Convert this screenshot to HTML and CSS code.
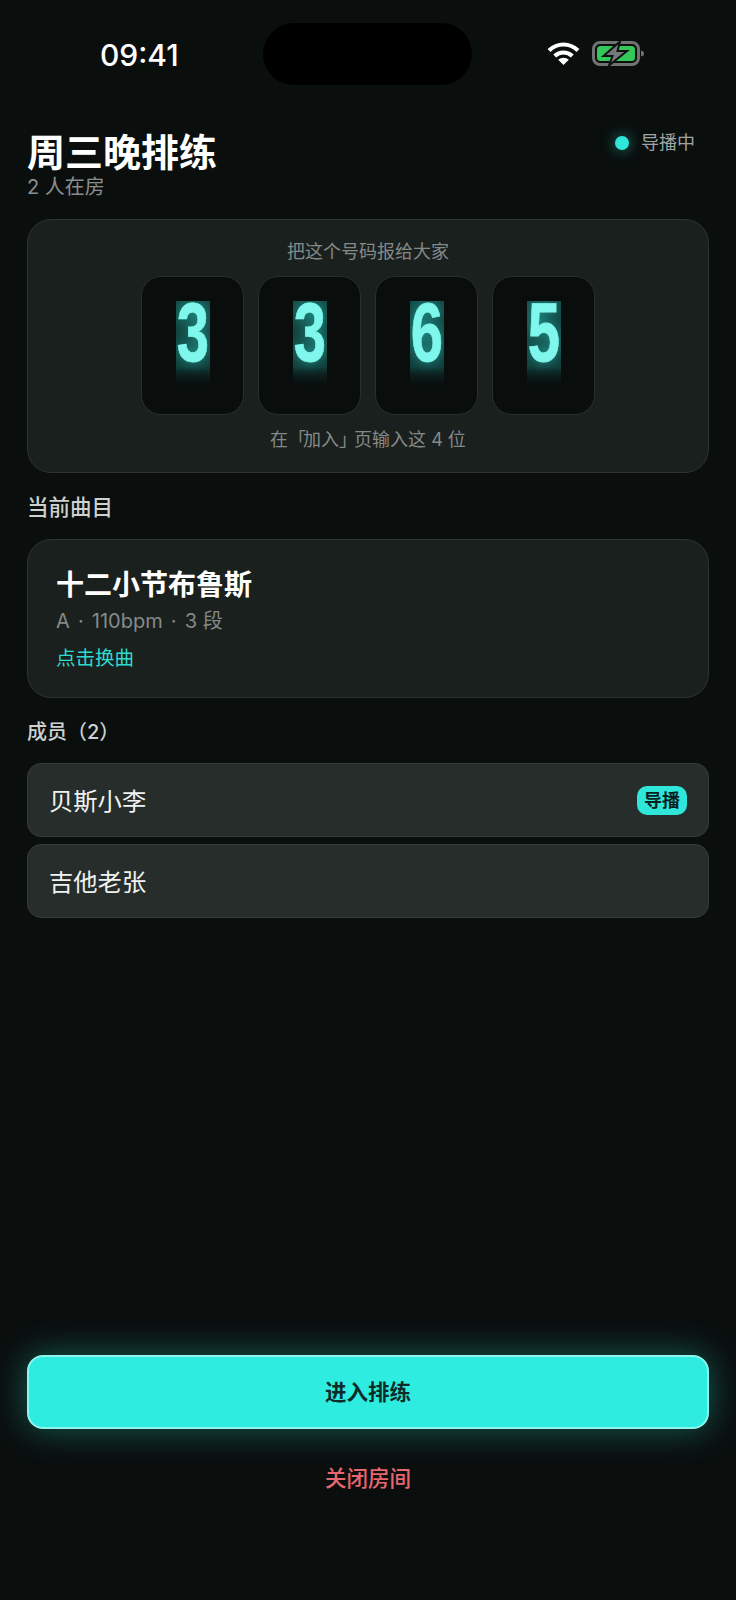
FILE: index.html
```html
<!DOCTYPE html>
<html lang="zh">
<head>
<meta charset="utf-8">
<title>周三晚排练</title>
<link rel="stylesheet" href="styles.css">
</head>
<body>
<div class="screen">
  <div class="status">
    <div class="time">09:41</div>
    <div class="island"></div>
    <div class="status-icons">
      <svg class="wifi" width="33" height="23" viewBox="0 0 33 23"><path d="M2 8.500C10.500 0.500 22.500 0.500 31 8.500" fill="none" stroke="#fff" stroke-width="4.200"/><path d="M7.700 14C12.800 9.300 20.200 9.300 25.300 14" fill="none" stroke="#fff" stroke-width="4.200"/><path d="M16.500 23L11.200 17.800C14.200 15 18.800 15 21.800 17.800Z" fill="#fff"/></svg>
      <svg class="battery" width="53" height="25" viewBox="0 0 53 25"><rect x="1.500" y="1.500" width="45" height="22" rx="6.500" fill="none" stroke="#6f7473" stroke-width="3"/><rect x="5" y="5" width="38" height="15" rx="3.500" fill="#34c759"/><path d="M28 0.500L11.500 15H20.500L17 24.500L35 10H25.500Z" fill="#74797a" stroke="#0d1211" stroke-width="2"/><path d="M49 9.500C51 10 52 11 52 12.500C52 14 51 15 49 15.500Z" fill="#6f7473"/></svg>
    </div>
  </div>

  <header class="head">
    <div>
      <h1 class="title">周三晚排练</h1>
      <div class="subtitle">2 人在房</div>
    </div>
    <div class="role"><span class="dot"></span><span>导播中</span></div>
  </header>

  <section class="card code-card">
    <div class="code-hint">把这个号码报给大家</div>
    <div class="tiles">
      <div class="tile"><span class="glow"><span class="digit">3</span></span></div>
      <div class="tile"><span class="glow"><span class="digit">3</span></span></div>
      <div class="tile"><span class="glow"><span class="digit">6</span></span></div>
      <div class="tile"><span class="glow"><span class="digit">5</span></span></div>
    </div>
    <div class="code-hint lower">在<span class="tight">「</span>加入<span class="tight">」</span>页输入这 4 位</div>
  </section>

  <div class="label first">当前曲目</div>
  <section class="card song-card">
    <div class="song-name">十二小节布鲁斯</div>
    <div class="song-meta">A <span class="sep">·</span> 110bpm <span class="sep">·</span> 3 段</div>
    <div class="song-link">点击换曲</div>
  </section>

  <div class="label second">成员（2）</div>
  <div class="members">
    <div class="member"><span>贝斯小李</span><span class="badge">导播</span></div>
    <div class="member"><span>吉他老张</span></div>
  </div>

  <div class="actions">
    <button class="primary">进入排练</button>
    <button class="danger">关闭房间</button>
  </div>
</div>
</body>
</html>
```
FILE: styles.css
```css
* { box-sizing: border-box; }
html, body { margin: 0; padding: 0; background: #0a0f0e; }
body { font-family: Inter, "Noto Sans CJK SC", sans-serif; color: #fff; }
.screen { width: 736px; height: 1600px; padding: 23px 27px 0; display: flex; flex-direction: column; overflow: hidden; }

.status { display: grid; grid-template-columns: 236px 209px 1fr; height: 62px; align-items: center; }
.time { font-size: 30px; font-weight: 500; line-height: 36px; padding-left: 73px; margin-top: 2px; }
.island { width: 209px; height: 62px; background: #000; border-radius: 31px; }
.status-icons { display: flex; align-items: center; gap: 12px; padding-left: 75px; margin-top: -2px; }
.wifi, .battery { display: block; }

.head { display: flex; justify-content: space-between; align-items: flex-start; margin-top: 47px; height: 87px; }
.title { margin: 0; font-size: 38px; line-height: 40px; font-weight: 700; }
.subtitle { font-size: 20px; line-height: 24px; color: #8a8f8e; margin-top: 3px; }
.role { display: flex; align-items: center; gap: 12px; font-size: 18px; line-height: 24px; color: #a0a5a4; margin-right: 14px; margin-top: -1px; }
.dot { width: 14px; height: 14px; border-radius: 50%; background: #2ee6da; box-shadow: 0 0 14px rgba(46, 230, 218, .55); }

.card { background: #1a201e; border: 1.500px solid #2c3331; border-radius: 24px; }
.code-card { height: 254px; padding-top: 20px; }
.code-hint { text-align: center; font-size: 18px; line-height: 24px; color: #858a89; }
.tight { letter-spacing: -3px; }
.tiles { display: flex; justify-content: center; gap: 14px; margin-top: 12px; }
.tile { width: 103px; height: 139px; background: #090e0d; border: 1.500px solid #282f2d; border-radius: 20px; display: flex; justify-content: center; padding-top: 23.500px; }
.glow { display: flex; justify-content: center; width: 34px; height: 88px; background: linear-gradient(180deg, rgba(30, 130, 122, .5) 0%, rgba(30, 130, 122, .4) 75%, rgba(30, 130, 122, 0) 100%); -webkit-mask-image: linear-gradient(180deg, #000 75%, transparent 100%); mask-image: linear-gradient(180deg, #000 75%, transparent 100%); }
.digit { display: block; flex: none; height: 36px; margin-top: 1px; font-family: "Liberation Sans Narrow", "Liberation Sans", sans-serif; font-weight: 700; font-size: 50px; line-height: 36px; color: #80f7ec; -webkit-text-stroke: .5px #80f7ec; transform-origin: 50% 0; transform: scale(1.16, 1.68); text-shadow: 0 0 9px rgba(46, 230, 218, .6); }
.lower { margin-top: 13px; }

.label { font-size: 20px; line-height: 26px; font-weight: 500; color: #cdd1d0; }
.label.first { margin-top: 21px; font-size: 21.500px; }
.label.second { margin-top: 21px; }
.song-card { height: 159px; margin-top: 19px; padding: 27px 28px 0; }
.song-name { font-size: 28px; line-height: 36px; font-weight: 600; }
.song-meta { font-size: 20px; line-height: 26px; color: #858a89; margin-top: 5px; }
.sep { margin: 0 2.500px; }
.song-link { font-size: 19.500px; line-height: 26px; color: #2edccf; margin-top: 11px; }

.members { display: flex; flex-direction: column; gap: 7px; margin-top: 18px; }
.member { height: 74px; display: flex; align-items: center; justify-content: space-between; padding: 0 21px 2px; background: #262d2b; border: 1.500px solid #353c3a; border-radius: 14px; font-size: 24.300px; color: #f0f2f1; }
.badge { background: #2ee6da; color: #08201e; font-size: 18px; line-height: 29px; height: 29px; margin-top: 3px; padding: 0 7px; border-radius: 10px; font-weight: 700; }

.actions { margin-top: auto; margin-bottom: 84px; display: flex; flex-direction: column; }
button { font-family: inherit; cursor: pointer; }
.primary { height: 74px; padding-bottom: 4px; background: #2eecdf; border: 2px solid #8ff5ec; border-radius: 16px; color: #0d2b29; font-size: 21.500px; font-weight: 600; box-shadow: 0 0 34px rgba(46, 236, 223, .36); }
.danger { height: 74px; margin-top: 13px; padding-bottom: 6px; background: none; border: 0; color: #e8666f; font-size: 21.500px; font-weight: 500; }
```
